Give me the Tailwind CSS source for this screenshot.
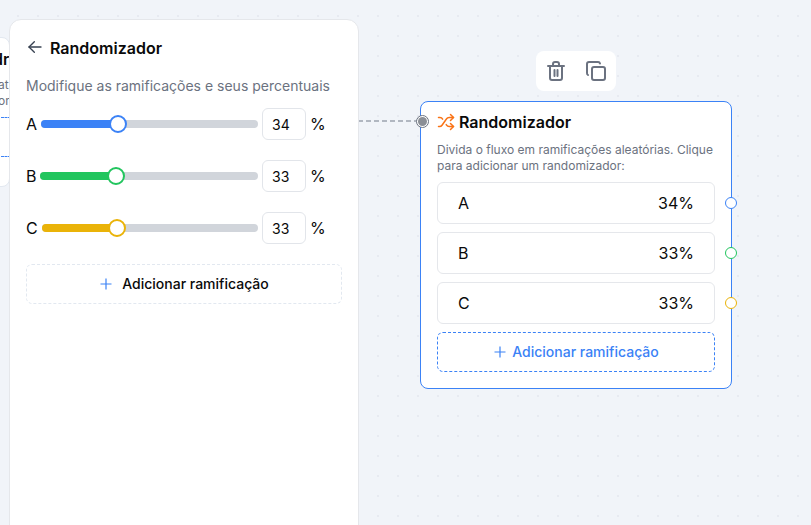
<!DOCTYPE html>
<html lang="en">
<head>
    <meta charset="UTF-8">
    <title>Randomizador</title>
    <script src="https://cdn.jsdelivr.net/npm/@tailwindcss/browser@4"></script>
</head>
<body class="font-['Inter',sans-serif] text-[#0a0a0a] overflow-hidden">
    <div class="relative w-[811px] h-[525px] overflow-hidden bg-[#f1f4f9] bg-[radial-gradient(#e7eaf1_1px,transparent_1px)] bg-[size:20px_20px] bg-[position:8px_6px]">

        <!-- node behind the panel -->
        <div class="absolute left-[-100px] top-[37px] w-[110px] h-[150px] bg-white border border-[#e2e8f0] rounded-lg">
            <div class="absolute left-[92px] top-[9px] text-base font-semibold">dr</div>
            <div class="absolute left-[97px] top-[39px] text-xs text-[#6b7280] leading-4">ati<br>om</div>
            <div class="absolute left-[100px] top-[79px] w-[10px] border-t border-dashed border-[#3b82f6]"></div>
            <div class="absolute left-[100px] bottom-[29px] w-[10px] border-t border-dashed border-[#3b82f6]"></div>
        </div>

        <!-- edge -->
        <svg class="absolute left-[358px] top-[119px] w-[60px] h-[4px] text-[#9ca3af]" viewBox="0 0 60 4" fill="none" stroke="currentColor" stroke-width="1.6" stroke-dasharray="5 3"><path d="M0 2h60"/></svg>

        <!-- side panel -->
        <aside class="absolute left-[9px] top-[19px] w-[350px] h-[520px] bg-white border border-[#e5e7eb] rounded-xl px-[16px] pt-[16px]">
            <div class="flex items-center h-6">
                <svg class="w-4 h-4 ml-px mr-[7px] text-[#374151] -translate-y-px" viewBox="0 0 24 24" fill="none" stroke="currentColor" stroke-width="2" stroke-linecap="round" stroke-linejoin="round"><path d="M21 12H3"/><path d="M11 4l-8 8 8 8"/></svg>
                <h1 class="text-base font-semibold leading-6">Randomizador</h1>
            </div>
            <p class="mt-[16px] text-sm leading-5 text-[#6b7280]">Modifique as ramificações e seus percentuais</p>

            <div class="mt-[12px] flex flex-col gap-[20px]">
                <div class="flex items-center h-8">
                    <span class="text-base w-[15px] shrink-0">A</span>
                    <div class="relative flex-1 h-2 rounded-full bg-[#d1d5db]">
                        <div class="absolute left-0 top-0 h-2 w-[77px] rounded-full bg-[#3b82f6]"></div>
                        <div class="absolute left-[68px] top-[-5px] w-[18px] h-[18px] rounded-full bg-white border-2 border-[#3b82f6]"></div>
                    </div>
                    <div class="ml-[4px] w-[44px] h-8 border border-[#e2e5ea] rounded-md flex items-center pl-[9px] pt-px text-sm">34</div>
                    <span class="ml-[4px] w-[32px] text-base">%</span>
                </div>
                <div class="flex items-center h-8">
                    <span class="text-base w-[14px] shrink-0">B</span>
                    <div class="relative flex-1 h-2 rounded-full bg-[#d1d5db]">
                        <div class="absolute left-0 top-0 h-2 w-[76px] rounded-full bg-[#22c55e]"></div>
                        <div class="absolute left-[67px] top-[-5px] w-[18px] h-[18px] rounded-full bg-white border-2 border-[#22c55e]"></div>
                    </div>
                    <div class="ml-[4px] w-[44px] h-8 border border-[#e2e5ea] rounded-md flex items-center pl-[9px] pt-px text-sm">33</div>
                    <span class="ml-[4px] w-[32px] text-base">%</span>
                </div>
                <div class="flex items-center h-8">
                    <span class="text-base w-[16px] shrink-0">C</span>
                    <div class="relative flex-1 h-2 rounded-full bg-[#d1d5db]">
                        <div class="absolute left-0 top-0 h-2 w-[75px] rounded-full bg-[#eab308]"></div>
                        <div class="absolute left-[66px] top-[-5px] w-[18px] h-[18px] rounded-full bg-white border-2 border-[#eab308]"></div>
                    </div>
                    <div class="ml-[4px] w-[44px] h-8 border border-[#e2e5ea] rounded-md flex items-center pl-[9px] pt-px text-sm">33</div>
                    <span class="ml-[4px] w-[32px] text-base">%</span>
                </div>
            </div>

            <button class="mt-[20px] w-[316px] h-[40px] border border-dashed border-[#e2e8f0] rounded-md flex items-center justify-center gap-[11px] text-sm font-medium">
                <svg class="w-3 h-3 translate-x-px text-[#3b82f6]" viewBox="0 0 12 12" fill="none" stroke="currentColor" stroke-width="1.2"><path d="M6 .5v11M.5 6h11"/></svg>
                Adicionar ramificação
            </button>
        </aside>

        <!-- toolbar over the node -->
        <div class="absolute left-[536px] top-[51px] w-[80px] h-[40px] bg-white rounded-lg flex items-center justify-center gap-[16px] text-[#6b7280]">
            <svg class="w-6 h-6" viewBox="0 0 24 24" fill="none" stroke="currentColor" stroke-width="2" stroke-linecap="round" stroke-linejoin="round"><path d="M4 7h16"/><path d="M6 7v12a2 2 0 0 0 2 2h8a2 2 0 0 0 2-2V7"/><path d="M9 7V5a2 2 0 0 1 2-2h2a2 2 0 0 1 2 2v2"/><path d="M10.5 11v6M13.5 11v6"/></svg>
            <svg class="w-6 h-6" viewBox="0 0 24 24" fill="none" stroke="currentColor" stroke-width="2" stroke-linecap="round" stroke-linejoin="round"><rect x="8" y="8" width="13" height="13" rx="2"/><path d="M4 16a2 2 0 0 1-1-2V5a2 2 0 0 1 2-2h9a2 2 0 0 1 2 1.5"/></svg>
        </div>

        <!-- randomizer node -->
        <div class="absolute left-[420px] top-[101px] w-[312px] h-[288px] bg-white border border-[#3b82f6] rounded-lg px-[16px] pt-[10px]">
            <div class="flex items-center gap-[4px] h-5">
                <svg class="w-[18px] h-[18px] text-[#f97316]" viewBox="0 0 24 24" fill="none" stroke="currentColor" stroke-width="2" stroke-linecap="round" stroke-linejoin="round"><path d="M2 18h1.4c1.3 0 2.5-.6 3.3-1.7l6.1-8.6c.7-1.1 2-1.7 3.3-1.7H22"/><path d="m18 2 4 4-4 4"/><path d="M2 6h1.9c1.5 0 2.9.9 3.6 2.2"/><path d="M22 18h-5.9c-1.3 0-2.6-.7-3.3-1.8l-.5-.8"/><path d="m18 14 4 4-4 4"/></svg>
                <h2 class="text-base font-semibold leading-5">Randomizador</h2>
            </div>
            <p class="mt-[10px] text-xs leading-4 text-[#6b7280]">Divida o fluxo em ramificações aleatórias. Clique para adicionar um randomizador:</p>
            <div class="mt-[8px] flex flex-col gap-[8px] w-[278px]">
                <div class="h-[42px] border border-[#e5e7eb] rounded-md flex items-center justify-between px-[20px] text-base"><span>A</span><span>34%</span></div>
                <div class="h-[42px] border border-[#e5e7eb] rounded-md flex items-center justify-between px-[20px] text-base"><span>B</span><span>33%</span></div>
                <div class="h-[42px] border border-[#e5e7eb] rounded-md flex items-center justify-between px-[20px] text-base"><span>C</span><span>33%</span></div>
                <button class="h-[40px] border border-dashed border-[#3b82f6] rounded-md flex items-center justify-center gap-[7px] text-sm font-medium text-[#3b82f6]">
                    <svg class="w-3 h-3 translate-x-px" viewBox="0 0 12 12" fill="none" stroke="currentColor" stroke-width="1.2"><path d="M6 .5v11M.5 6h11"/></svg>
                    Adicionar ramificação
                </button>
            </div>
        </div>

        <!-- handles -->
        <div class="absolute left-[416px] top-[115px] w-[13px] h-[13px] rounded-full bg-white border border-[#6b7280] flex items-center justify-center">
            <div class="w-[9px] h-[9px] rounded-full bg-[#8b8f96]"></div>
        </div>
        <div class="absolute left-[725px] top-[197px] w-3 h-3 rounded-full bg-white border-[1.5px] border-[#3b82f6]"></div>
        <div class="absolute left-[725px] top-[247px] w-3 h-3 rounded-full bg-white border-[1.5px] border-[#22c55e]"></div>
        <div class="absolute left-[725px] top-[297px] w-3 h-3 rounded-full bg-white border-[1.5px] border-[#eab308]"></div>
    </div>
</body>
</html>
